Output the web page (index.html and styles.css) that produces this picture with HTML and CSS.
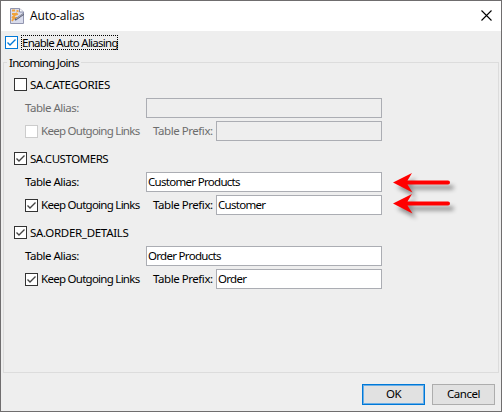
FILE: index.html
```html
<!DOCTYPE html>
<html lang="en">
<head>
<meta charset="utf-8">
<title>Auto-alias</title>
<link rel="stylesheet" href="styles.css">
</head>
<body>
<svg class="defs" width="0" height="0">
  <symbol id="tick" viewBox="0 0 13 13"><path d="M2.5 6.5 5 9l5.5-5.5" fill="none" stroke="currentColor" stroke-width="1.35"/></symbol>
  <symbol id="arrow" viewBox="0 0 66 28"><path d="M3 10.5 22 1 17.5 8.5H58q2 0 2 2t-2 2H17.5l5 8z"/></symbol>
</svg>
<div class="window">
  <header class="titlebar">
    <svg class="app-icon" width="16" height="18" viewBox="0 0 16 18">
      <path d="M1.5 1.5h9l4 3.5v11.5h-13z" fill="#d9dcec" stroke="#9296b0"/>
      <path d="M10.5 1.5V5h4" fill="#fff" stroke="#858aa8"/>
      <path d="M3 3.5h3M7.500 3.500l2 1M3 7h4l1-1M3 11l3-3 3-1M3 14l2-3h3" fill="none" stroke="#f0a33b" stroke-width="1.8"/>
      <path d="m6 13 8.500-6" stroke="#5d6175" stroke-width="2"/>
      <path d="m7 12 7-5" stroke="#c4c7d5" stroke-width=".7"/>
    </svg>
    <h1 class="title">Auto-alias</h1>
    <svg class="close" width="11" height="11" viewBox="0 0 11 11"><path d="m.5.5 10 10m0-10-10 10" stroke="#000" stroke-width="1.1"/></svg>
  </header>
  <main>
    <label class="enable"><span class="box focus"><svg><use href="#tick"/></svg></span><span class="enable-text">Enable Auto Aliasing</span></label>
    <section class="joins">
      <h2 class="legend">Incoming Joins</h2>
      <div class="join off">
        <div class="head"><span class="box"></span><span class="cat">SA.CATEGORIES</span></div>
        <div class="row"><span class="alias">Table Alias:</span><span class="field wide"></span></div>
        <div class="row"><span class="box"></span><span class="keep">Keep Outgoing Links</span><span class="prefix">Table Prefix:</span><span class="field"></span></div>
      </div>
      <div class="join">
        <div class="head"><span class="box"><svg><use href="#tick"/></svg></span><span class="cust">SA.CUSTOMERS</span></div>
        <div class="row"><span class="alias">Table Alias:</span><span class="field wide">Customer Products</span></div>
        <div class="row"><span class="box"><svg><use href="#tick"/></svg></span><span class="keep">Keep Outgoing Links</span><span class="prefix">Table Prefix:</span><span class="field">Customer</span></div>
        <svg class="arrow first"><use href="#arrow"/></svg>
        <svg class="arrow second"><use href="#arrow"/></svg>
      </div>
      <div class="join">
        <div class="head"><span class="box"><svg><use href="#tick"/></svg></span><span class="order">SA.ORDER_DETAILS</span></div>
        <div class="row"><span class="alias">Table Alias:</span><span class="field wide">Order Products</span></div>
        <div class="row"><span class="box"><svg><use href="#tick"/></svg></span><span class="keep">Keep Outgoing Links</span><span class="prefix">Table Prefix:</span><span class="field">Order</span></div>
      </div>
    </section>
  </main>
  <footer class="actions"><button class="button ok">OK</button><button class="button">Cancel</button></footer>
</div>
</body>
</html>
```
FILE: styles.css
```css
* { box-sizing: border-box; }
body { margin: 0; overflow: hidden; font: 11.5px/14px "Noto Sans", sans-serif; letter-spacing: -0.6px; color: #000; white-space: nowrap; }
h1, h2 { margin: 0; font: inherit; }
.defs { position: absolute; }
.window { width: 502px; height: 412px; border: 1px solid #6f6d6e; background: #eee; display: flex; flex-direction: column; }
.titlebar { height: 30px; flex: none; background: #fff; display: flex; align-items: center; padding: 0 9px 0 8px; }
.app-icon { flex: none; margin-right: 4px; }
.title { flex: 1; font: 12px/16px "Open Sans", sans-serif; letter-spacing: -0.2px; padding-left: 1px; }
.title { letter-spacing: -0.1px; }
.close { margin-top: -1px; }
main { flex: none; padding: 4px 2px 0; }
.enable { display: flex; align-items: center; height: 14px; padding-left: 2px; }
.enable-text { width: 97px; height: 15px; margin-left: 3px; border: 1px dotted #000; line-height: 13px; }
.enable-text, .keep, .legend { letter-spacing: -0.73px; }
.box { width: 13px; height: 13px; flex: none; border: 1px solid #333; background: #fff; color: #444; }
.box svg { display: block; width: 13px; height: 13px; margin: -1px; }
.focus { border-color: #0078d7; color: #0078d7; }
.joins { height: 311px; margin-top: 13px; border: 1px solid #dcdcdc; padding-left: 10px; }
.legend { display: block; width: 74px; height: 14px; margin: -7px 0 0 -7px; padding-left: 2px; background: #eee; }
.join { position: relative; height: 74px; padding-top: 7px; }
.head { display: flex; align-items: center; gap: 3px; height: 15px; }
.cat, .order { letter-spacing: -0.3px; }
.cust { letter-spacing: -0.45px; }
.row { display: flex; align-items: center; height: 20px; margin: 6px 0 0 11px; }
.row + .row { margin-top: 3px; }
.row .box { margin-top: 1px; }
.alias { width: 121px; letter-spacing: -0.5px; }
.keep { width: 109px; margin-left: 3px; }
.prefix { width: 63px; margin-left: 3px; letter-spacing: -0.45px; }
.field { width: 166px; height: 20px; border: 1px solid #abadb3; background: #fff; padding: 2px 0 0 1px; letter-spacing: -0.7px; }
.wide { width: 236px; }
.off .row { color: #6d6d6d; }
.off .row .box { border-color: #ccc; }
.off .field { background: #eee; }
.arrow { position: absolute; left: 376px; width: 66px; height: 28px; fill: red; filter: drop-shadow(4px 5px 2px rgb(0 0 0 / .4)); }
.first { top: 28px; }
.second { top: 49px; }
.actions { display: flex; gap: 7px; margin: 11px 5px 0 361px; }
.button { width: 63px; height: 21px; padding: 0 0 1px; border: 1px solid #adadad; background: #e1e1e1; font: inherit; letter-spacing: -0.5px; color: #000; }
.ok { border-color: #0078d7; box-shadow: inset 0 0 0 1px #6aaee6; }
```
